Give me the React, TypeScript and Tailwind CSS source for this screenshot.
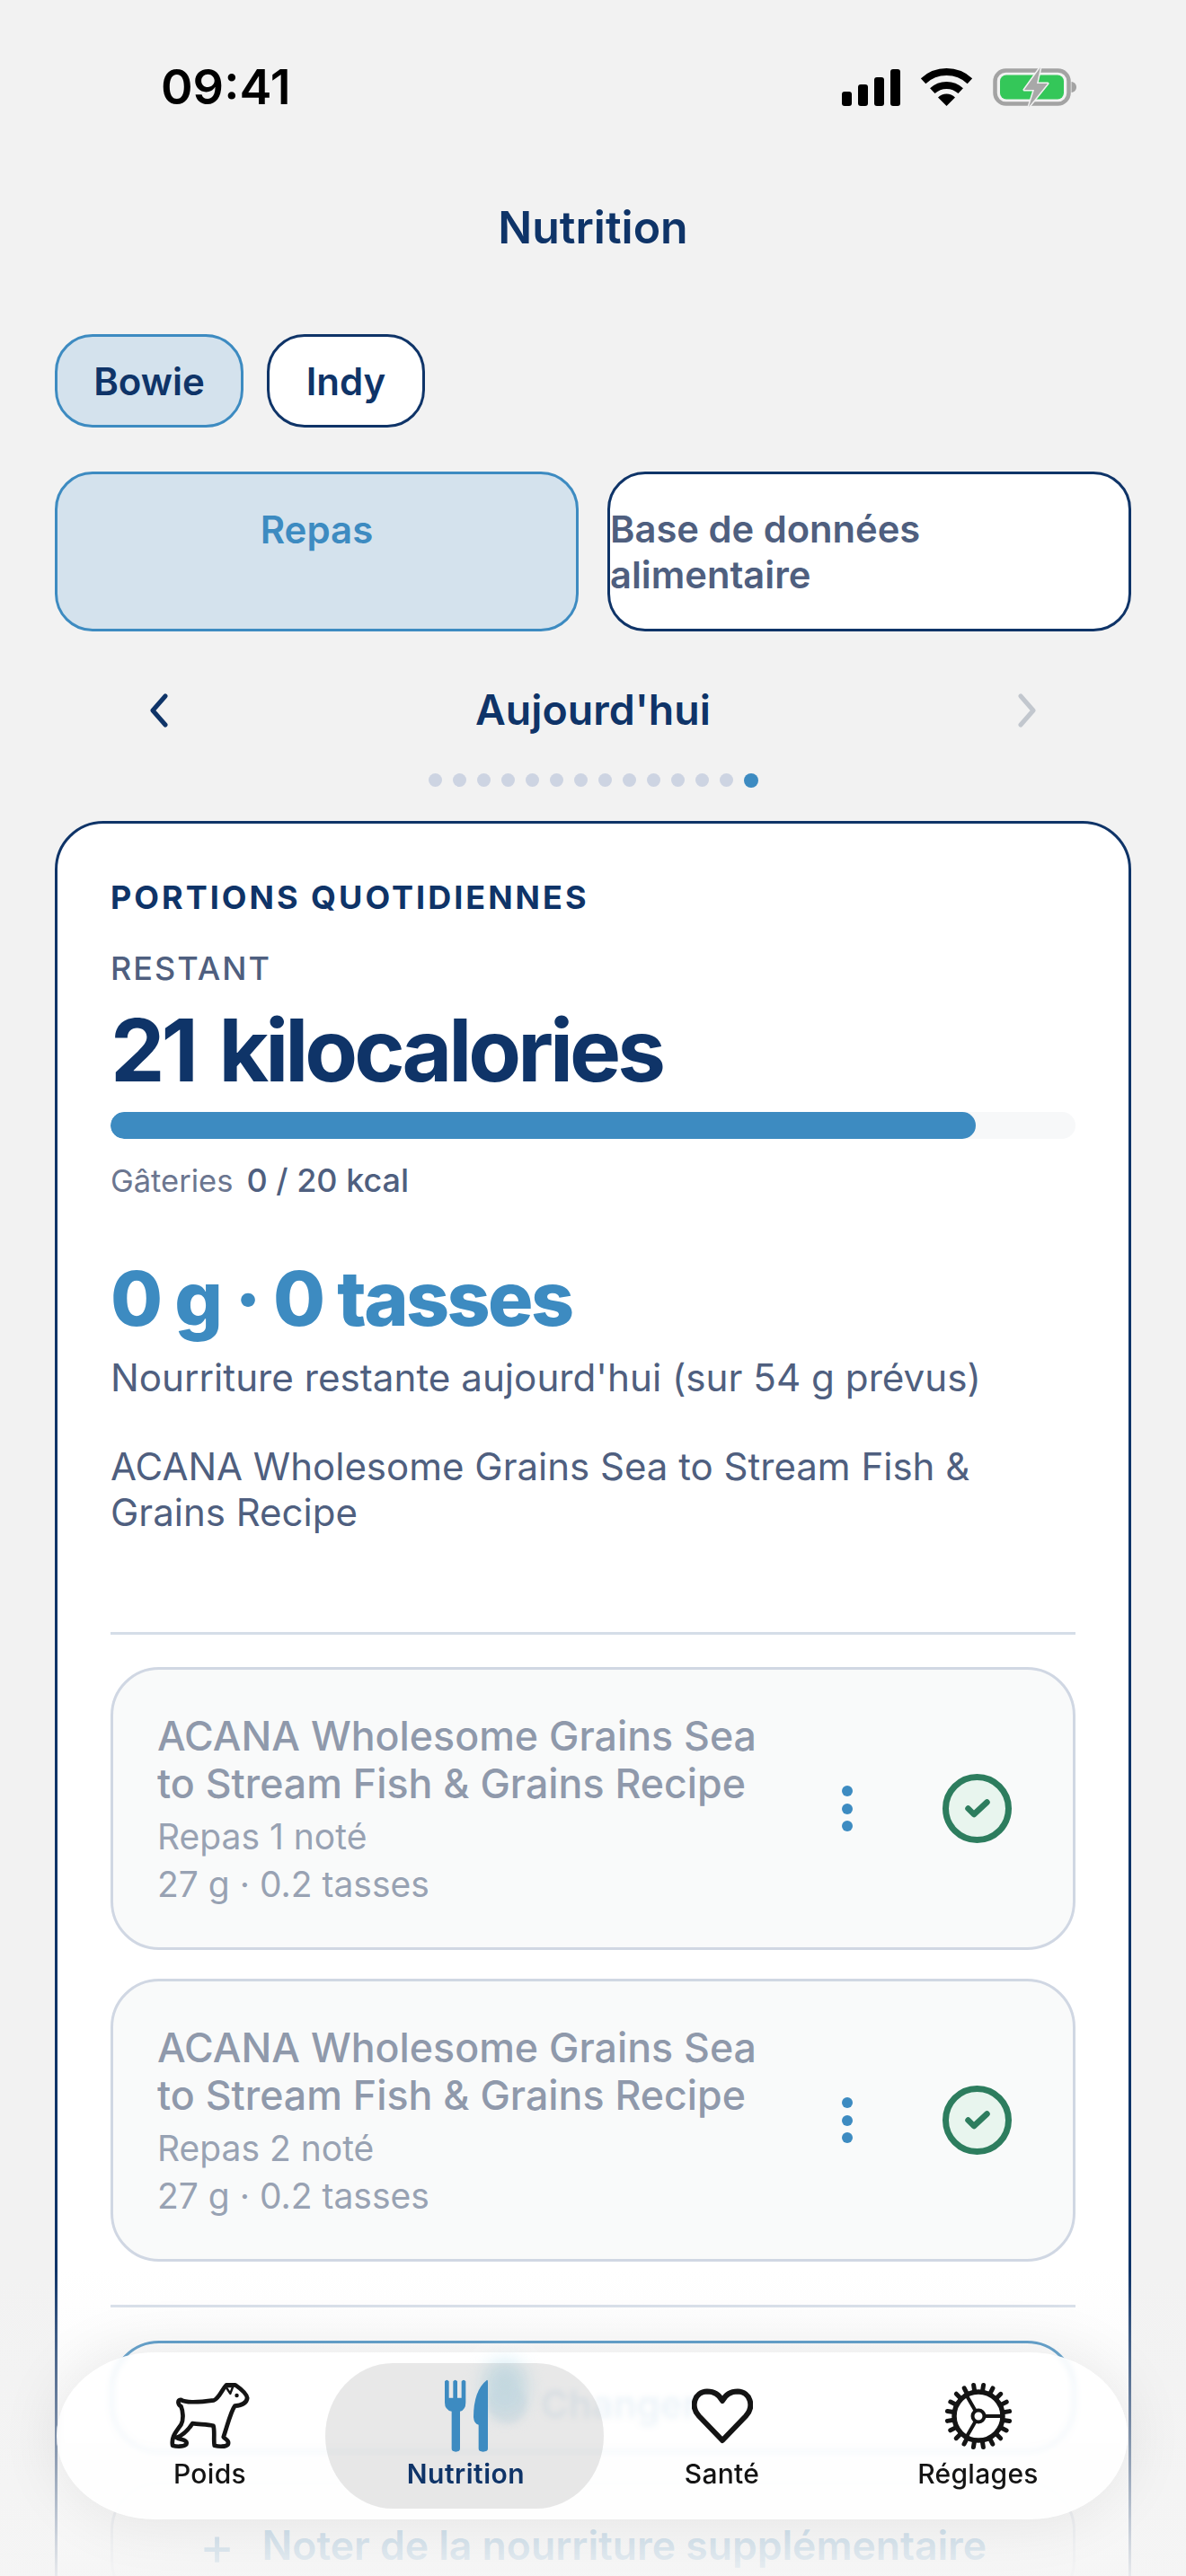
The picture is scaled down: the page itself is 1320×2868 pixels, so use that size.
import React from "react";

function Signal() {
  return (
    <svg width="65" height="41" viewBox="0 0 65 41" fill="#000">
      <rect x="0" y="25" width="11" height="16" rx="3" />
      <rect x="18" y="17" width="11" height="24" rx="3" />
      <rect x="36" y="9" width="11" height="32" rx="3" />
      <rect x="54" y="0" width="11" height="41" rx="3" />
    </svg>
  );
}

function Wifi() {
  return (
    <svg width="57" height="42" viewBox="0 0 57 42" fill="none">
      <path d="M2.6 14.2 A38 38 0 0 1 54.4 14.2" stroke="#000" strokeWidth="8" />
      <path d="M12.8 25.2 A23 23 0 0 1 44.2 25.2" stroke="#000" strokeWidth="8" />
      <path d="M28.5 42 L19 32.5 A13.5 13.5 0 0 1 38 32.5 Z" fill="#000" />
    </svg>
  );
}

function Battery() {
  return (
    <svg width="93" height="46" viewBox="0 -2 93 46" fill="none">
      <rect x="2.5" y="2.5" width="82" height="37" rx="12" stroke="#a3a3a3" strokeWidth="4.5" />
      <rect x="8" y="7.5" width="71" height="27" rx="7" fill="#34c759" />
      <path d="M87.5 15 C91 15.5 93 18 93 21 C93 24 91 26.5 87.5 27 Z" fill="#a3a3a3" />
      <path d="M53 -1 L35 24 L46 24 L40 43 L61 17 L49 17 Z" fill="#a8a8a8" stroke="#f2f2f2" strokeWidth="3" paintOrder="stroke" strokeLinejoin="round" />
    </svg>
  );
}

function Chevron({ dir, color }: { dir: "left" | "right"; color: string }) {
  return (
    <svg width="21" height="38" viewBox="0 0 21 38" fill="none">
      <path d={dir === "left" ? "M18 3 L4 19 L18 35" : "M3 3 L17 19 L3 35"} stroke={color} strokeWidth="5" strokeLinecap="round" strokeLinejoin="round" />
    </svg>
  );
}

function Dog() {
  return (
    <svg width="93" height="78" viewBox="100 90 295 248" fill="none">
      <path
        d="M145 156 C160 166 190 168 262 158 C280 152 292 118 306 104 L338 104 C358 118 378 134 380 150 C378 168 356 176 336 178 C322 196 312 240 296 288 C300 296 318 298 312 314 C304 324 278 322 264 318 C260 300 266 268 260 248 C238 242 212 244 186 240 C172 262 152 282 130 290 C140 298 172 296 164 314 C152 324 128 322 116 318 C110 288 128 270 146 244 C156 226 152 194 146 180 C134 172 132 158 145 156 Z"
        stroke="#141414"
        strokeWidth="15"
        strokeLinejoin="round"
      />
      <path d="M304 110 L330 108 L320 134 Z" stroke="#141414" strokeWidth="8" strokeLinejoin="round" />
      <circle cx="343" cy="141" r="7" fill="#141414" />
    </svg>
  );
}

function Cutlery() {
  return (
    <svg width="50" height="82" viewBox="1022 83 148 246" fill="#3d8bc1">
      <path d="M1024 90 Q1031 80 1038 90 V145 H1052 V90 Q1059 80 1066 90 V145 H1080 V90 Q1087 80 1094 90 V160 Q1094 185 1075 190 V315 Q1075 325 1061 325 Q1047 325 1047 315 V190 Q1024 185 1024 160 Z" />
      <path d="M1165 85 Q1120 120 1120 210 Q1122 232 1137 235 V315 Q1137 325 1152 325 Q1168 325 1168 315 V92 Q1168 85 1165 85 Z" />
    </svg>
  );
}

function Heart() {
  return (
    <svg width="68" height="62" viewBox="0 0 68 62" fill="none">
      <path d="M34 58 L8 31 C-2 20 3 4 17 3.5 C25 3.5 31 8 34 14 C37 8 43 3.5 51 3.5 C65 4 70 20 60 31 Z" stroke="#141414" strokeWidth="6" strokeLinejoin="round" />
    </svg>
  );
}

function Gear() {
  const teeth = Array.from({ length: 20 }, (_, i) => (i * Math.PI * 2) / 20 + 0.16);
  const spokes = [0, (120 * Math.PI) / 180, (240 * Math.PI) / 180];
  return (
    <svg width="76" height="76" viewBox="0 0 76 76" fill="none">
      <circle cx="38" cy="38" r="27" stroke="#141414" strokeWidth="5.5" />
      {teeth.map((a, i) => (
        <line key={i} x1={38 + 28 * Math.cos(a)} y1={38 + 28 * Math.sin(a)} x2={38 + 35 * Math.cos(a)} y2={38 + 35 * Math.sin(a)} stroke="#141414" strokeWidth="5" strokeLinecap="round" />
      ))}
      {spokes.map((a, i) => (
        <line key={i} x1={38 + 6 * Math.cos(a)} y1={38 + 6 * Math.sin(a)} x2={38 + 27 * Math.cos(a)} y2={38 + 27 * Math.sin(a)} stroke="#141414" strokeWidth="4" />
      ))}
      <circle cx="38" cy="38" r="6.5" fill="#fff" stroke="#141414" strokeWidth="4" />
    </svg>
  );
}

function Meal({ n }: { n: number }) {
  return (
    <div className="flex h-[315px] items-center rounded-[54px] border-[3px] border-[#d0d7e3] bg-[#f9fafa] pl-[49px]">
      <div className="w-[762px] shrink-0 pt-[3px]">
        <div className="w-[690px] text-[44.7px] font-medium leading-[53.5px] text-[#8f99ab]">ACANA Wholesome Grains Sea to Stream Fish &amp; Grains Recipe</div>
        <div className="mt-[4px] text-[39px] leading-[53px] text-[#98a2b3]">Repas {n} noté</div>
        <div className="text-[39px] leading-[53px] text-[#98a2b3]">27 g · 0.2 tasses</div>
      </div>
      <div className="flex w-[12px] flex-col gap-[7.5px]">
        <div className="h-[12px] w-[12px] rounded-full bg-[#3d8bc1]" />
        <div className="h-[12px] w-[12px] rounded-full bg-[#3d8bc1]" />
        <div className="h-[12px] w-[12px] rounded-full bg-[#3d8bc1]" />
      </div>
      <div className="ml-[100px] flex h-[77px] w-[77px] items-center justify-center rounded-full border-[7px] border-[#2d7d5e] bg-[#e8f5ee]">
        <svg width="28" height="21" viewBox="0 0 28 21" fill="none">
          <path d="M3.5 10.5 L10 17 L24.5 3.5" stroke="#2d7d5e" strokeWidth="6.5" strokeLinecap="round" strokeLinejoin="round" />
        </svg>
      </div>
    </div>
  );
}

function NavItem({ label, active, children }: { label: string; active?: boolean; children: React.ReactNode }) {
  return (
    <div className="relative flex flex-col items-center">
      <div className="flex h-[84px] items-center justify-center">{children}</div>
      <div className={active ? "mt-[2px] text-[30px] font-semibold leading-[40px] tracking-[0.5px] text-[#0f3468]" : "mt-[2px] text-[30px] font-medium leading-[40px] tracking-[0.3px] text-[#141414]"}>{label}</div>
    </div>
  );
}

export default function App() {
  return (
    <div className="relative h-[2868px] w-[1320px] overflow-hidden bg-[#f2f2f2] font-[Inter,sans-serif]">
      <div className="mt-[76px] flex h-[42px] items-center justify-between pl-[179px] pr-[122px]">
        <div className="text-[54px] font-semibold leading-[42px] text-black">09:41</div>
        <div className="flex items-center gap-[23px]">
          <Signal />
          <Wifi />
          <Battery />
        </div>
      </div>

      <div className="mt-[105px] text-center text-[50px] font-semibold leading-[60px] text-[#0f3468]">Nutrition</div>

      <div className="px-[61px]">
        <div className="mt-[89px] flex gap-[26px]">
          <div className="flex h-[104px] w-[210px] items-center justify-center rounded-[42px] border-[3px] border-[#3d8bc1] bg-[#d4e2ed] text-[42px] font-semibold text-[#0f3468]">Bowie</div>
          <div className="flex h-[104px] w-[176px] items-center justify-center rounded-[42px] border-[3px] border-[#0f3468] bg-white text-[42px] font-semibold text-[#0f3468]">Indy</div>
        </div>

        <div className="mt-[49px] flex gap-[32px]">
          <div className="h-[178px] w-[583px] rounded-[42px] border-[3px] border-[#3d8bc1] bg-[#d4e2ed] pt-[36px] text-center text-[42px] font-semibold leading-[51px] text-[#3d8bc1]">Repas</div>
          <div className="h-[178px] w-[583px] rounded-[42px] border-[3px] border-[#0f3468] bg-white pt-[36px] text-[41.7px] font-semibold leading-[51px] text-[#4f5f7f]">
            Base de données
            <br />
            alimentaire
          </div>
        </div>

        <div className="mt-[58px] flex h-[60px] items-center justify-between px-[105px]">
          <Chevron dir="left" color="#0f3468" />
          <div className="text-[46.5px] font-semibold text-[#0f3468]">Aujourd'hui</div>
          <Chevron dir="right" color="#c2c7ce" />
        </div>

        <div className="mt-[40px] flex h-[16px] justify-center gap-[12px]">
          {Array.from({ length: 14 }, (_, i) => (
            <div key={i} className={i === 13 ? "h-[16px] w-[16px] rounded-full bg-[#3d8bc1]" : "h-[15px] w-[15px] rounded-full bg-[#cdd4e2]"} />
          ))}
        </div>

        <div className="mt-[37px] rounded-[54px] border-[3px] border-[#0f3468] bg-white px-[59px] pt-[60px] pb-[100px]">
          <div className="text-[36px] font-bold leading-[44px] tracking-[3px] text-[#0f3468]">PORTIONS QUOTIDIENNES</div>
          <div className="mt-[35px] text-[36px] font-medium leading-[44px] tracking-[2px] text-[#4f5f7f]">RESTANT</div>
          <div className="mt-[19px] text-[96px] font-bold leading-[100px] tracking-[-4px] [word-spacing:8px] text-[#0f3468]">21 kilocalories</div>
          <div className="mt-[19px] h-[30px] overflow-hidden rounded-full bg-[#f7f8f9]">
            <div className="h-full w-[963px] rounded-full bg-[#3d8bc1]" />
          </div>
          <div className="mt-[24px] flex items-baseline gap-[15px] leading-[44px]">
            <span className="text-[34.5px] text-[#6b7690]">Gâteries</span>
            <span className="text-[36px] font-medium text-[#4f5f7f]">0 / 20 kcal</span>
          </div>
          <div className="mt-[61px] text-[84px] font-extrabold leading-[96px] tracking-[-2.6px] text-[#3d8bc1]">0 g · 0 tasses</div>
          <div className="mt-[14px] text-[42.2px] leading-[51px] text-[#4f5f7f]">Nourriture restante aujourd'hui (sur 54 g prévus)</div>
          <div className="mt-[48px] w-[1000px] text-[42px] leading-[51px] text-[#4f5f7f]">ACANA Wholesome Grains Sea to Stream Fish &amp; Grains Recipe</div>
          <div className="mt-[108px] h-[3px] bg-[#d5dde8]" />
          <div className="mt-[36px] flex flex-col gap-[32px]">
            <Meal n={1} />
            <Meal n={2} />
          </div>
          <div className="mt-[48px] h-[3px] bg-[#d5dde8]" />
          <div className="mt-[37px] flex h-[125px] items-center justify-center gap-[16px] rounded-[54px] border-[3px] border-[#3d8bc1] bg-white pt-[16px] text-[42px] font-semibold text-[#3d8bc1]">
            <div className="h-[42px] w-[42px] rounded-full bg-[#3d8bc1]" />
            Changer
          </div>
          <div className="mt-[32px] flex h-[142px] items-center justify-center gap-[30px] rounded-[54px] border-[3px] border-[#d0d7e3] text-[44.5px] font-semibold text-[#3d8bc1]">
            <span className="text-[60px] font-normal leading-none">+</span>
            Noter de la nourriture supplémentaire
          </div>
        </div>
      </div>

      <div className="pointer-events-none absolute inset-x-0 bottom-0 h-[340px] bg-gradient-to-b from-transparent to-[#f5f5f5f0]" />

      <div className="absolute left-[63px] top-[2619px] grid h-[186px] w-[1192px] grid-cols-4 rounded-[110px/93px] bg-white/[0.84] pl-[28px] pr-[24px] pt-[29px] shadow-[0_0_70px_rgba(0,0,0,0.09)] backdrop-blur-[3px]">
        <div className="absolute left-[475px] top-[8px] h-[62px] w-[48px] rounded-full bg-[#d8eef6] blur-[10px]" />
        <div className="absolute left-[299px] top-[12px] h-[162px] w-[310px] rounded-[75px/81px] bg-black/[0.09]" />
        <NavItem label="Poids"><Dog /></NavItem>
        <NavItem label="Nutrition" active><Cutlery /></NavItem>
        <NavItem label="Santé"><Heart /></NavItem>
        <NavItem label="Réglages"><Gear /></NavItem>
      </div>
    </div>
  );
}
